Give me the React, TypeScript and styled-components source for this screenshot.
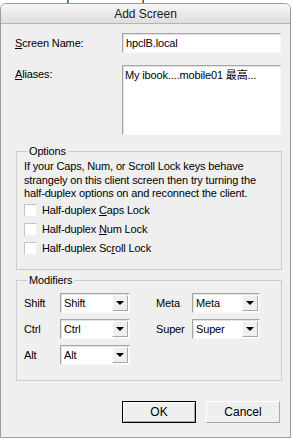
import React from 'react';
import styled, {createGlobalStyle} from "styled-components";

const GlobalStyle = createGlobalStyle`
  html, body {
    margin: 0;
    padding: 0;
    background: #ffffff;
  }
  body {
    font-family: "Liberation Sans", Arial, "Noto Sans CJK SC", sans-serif;
    font-size: 11px;
    letter-spacing: -0.15px;
    color: #000;
  }
`

const modifiers = [
    {left: "Shift", right: "Meta"},
    {left: "Ctrl", right: "Super"},
    {left: "Alt"},
]

const Mn = styled.span`
  text-decoration: underline;
  text-underline-offset: 1px;
`

const Combo = ({value}: { value: string }) => (
    <ComboBox>
        <ComboText>{value}</ComboText>
        <ComboButton>
            <Arrow/>
        </ComboButton>
    </ComboBox>
)

export default function App() {
    return (
        <Page>
            <GlobalStyle/>
            <BackStrip>
                <BackText>r server and provide the requested information.  Then</BackText>
            </BackStrip>
            <Dialog>
                <TitleBar>Add Screen</TitleBar>
                <Body>
                    <FormRow>
                        <Label><Mn>S</Mn>creen Name:</Label>
                        <TextField>hpclB.local</TextField>
                    </FormRow>
                    <FormRow $last>
                        <Label $top><Mn>A</Mn>liases:</Label>
                        <ListField>My ibook....mobile01 最高...</ListField>
                    </FormRow>

                    <Group $bottom={14}>
                        <Legend>Options</Legend>
                        <Hint>
                            If your Caps, Num, or Scroll Lock keys behave strangely on this client screen then try
                            turning the half-duplex options on and reconnect the client.
                        </Hint>
                        <Checks>
                            <CheckRow><CheckBox/><span>Half-duplex <Mn>C</Mn>aps Lock</span></CheckRow>
                            <CheckRow><CheckBox/><span>Half-duplex <Mn>N</Mn>um Lock</span></CheckRow>
                            <CheckRow><CheckBox/><span>Half-duplex Sc<Mn>r</Mn>oll Lock</span></CheckRow>
                        </Checks>
                    </Group>

                    <Group $bottom={15}>
                        <Legend>Modifiers</Legend>
                        <ModGrid>
                            {modifiers.map(m => (
                                <React.Fragment key={m.left}>
                                    <ModLabel>{m.left}</ModLabel>
                                    <Combo value={m.left}/>
                                    {m.right ? <ModLabel $right>{m.right}</ModLabel> : <span/>}
                                    {m.right ? <Combo value={m.right}/> : <span/>}
                                </React.Fragment>
                            ))}
                        </ModGrid>
                    </Group>

                    <Buttons>
                        <Button $primary>OK</Button>
                        <Button>Cancel</Button>
                    </Buttons>
                </Body>
            </Dialog>
        </Page>
    );
}

const Page = styled.div`
  width: 294px;
  height: 439px;
  overflow: hidden;
  background: #fff;
`

const BackStrip = styled.div`
  height: 3px;
  overflow: hidden;
`

const BackText = styled.div`
  margin-top: -10px;
  padding-left: 1px;
  line-height: 13px;
  font-size: 12px;
  white-space: pre;
  color: #000;
`

const Dialog = styled.div`
  width: 289px;
  height: 433px;
  border: 1px solid #9c9c9c;
  border-radius: 6px 6px 0 0;
  background: #efefef;
  display: flex;
  flex-direction: column;
`

const TitleBar = styled.div`
  height: 19px;
  border-radius: 5px 5px 0 0;
  border-bottom: 1px solid #b4b4b4;
  background: linear-gradient(#f6f6f6, #dedede);
  display: flex;
  align-items: center;
  justify-content: center;
  font-size: 12px;
  letter-spacing: 0;
  color: #1a1a1a;
`

const Body = styled.div`
  padding: 9px 8px 0 14px;
  display: flex;
  flex-direction: column;
`

const FormRow = styled.div<{ $last?: boolean }>`
  display: grid;
  grid-template-columns: 107px 159px;
  align-items: center;
  margin-bottom: ${p => p.$last ? 10 : 12}px;
`

const Label = styled.div<{ $top?: boolean }>`
  align-self: ${p => p.$top ? "start" : "center"};
  padding-top: ${p => p.$top ? "3px" : "0"};
`

const sunken = `
  background: #fff;
  border: 1px solid;
  border-color: #a5a5a5 #f8f8f8 #f8f8f8 #a5a5a5;
  box-shadow: inset 1px 1px 0 #e2e2e2;
`

const TextField = styled.div`
  ${sunken};
  height: 18px;
  padding: 0 3px;
  display: flex;
  align-items: center;
`

const ListField = styled.div`
  ${sunken};
  height: 64px;
  padding: 2px 2px;
  line-height: 14px;
  white-space: nowrap;
`

const Group = styled.fieldset<{ $bottom: number }>`
  margin: 0 0 4px 1px;
  padding: 0 8px ${p => p.$bottom}px 7px;
  width: 249px;
  border: 1px solid #cdcdcd;
`

const Legend = styled.legend`
  margin-left: 3px;
  padding: 0 2px;
  line-height: 13px;
`

const Hint = styled.p`
  margin: 2px 0 0;
  line-height: 13.5px;
`

const Checks = styled.div`
  margin-top: 3px;
  display: flex;
  flex-direction: column;
  gap: 6px;
`

const CheckRow = styled.label`
  display: flex;
  align-items: center;
  gap: 5px;
  height: 13px;
`

const CheckBox = styled.span`
  ${sunken};
  width: 11px;
  height: 11px;
  box-shadow: none;
  border-color: #c4c4c4 #f0f0f0 #f0f0f0 #c4c4c4;
`

const ModGrid = styled.div`
  margin-top: 6px;
  display: grid;
  grid-template-columns: 36px 70px 62px 68px;
  row-gap: 6px;
  align-items: center;
`

const ModLabel = styled.div<{ $right?: boolean }>`
  padding-left: ${p => p.$right ? 26 : 0}px;
`

const ComboBox = styled.div`
  ${sunken};
  height: 18px;
  display: flex;
  align-items: center;
  justify-content: space-between;
`

const ComboText = styled.span`
  padding-left: 3px;
`

const ComboButton = styled.span`
  width: 14px;
  height: 14px;
  margin-right: 1px;
  background: #efefef;
  border: 1px solid;
  border-color: #fdfdfd #a8a8a8 #a8a8a8 #fdfdfd;
  display: flex;
  align-items: center;
  justify-content: center;
`

const Arrow = styled.span`
  width: 0;
  height: 0;
  border-left: 4px solid transparent;
  border-right: 4px solid transparent;
  border-top: 4px solid #000;
`

const Buttons = styled.div`
  margin-top: 16px;
  padding-left: 107px;
  display: flex;
  gap: 10px;
`

const Button = styled.button<{ $primary?: boolean }>`
  width: 74px;
  height: 22px;
  padding: 0;
  font-family: inherit;
  font-size: 12px;
  letter-spacing: 0;
  color: #000;
  background: #efefef;
  border: 1px solid;
  border-color: ${p => p.$primary ? "#000" : "#fff #a8a8a8 #a8a8a8 #fff"};
  box-shadow: ${p => p.$primary ? "inset 1px 1px 0 #fff, inset -1px -1px 0 #a8a8a8" : "none"};
`
